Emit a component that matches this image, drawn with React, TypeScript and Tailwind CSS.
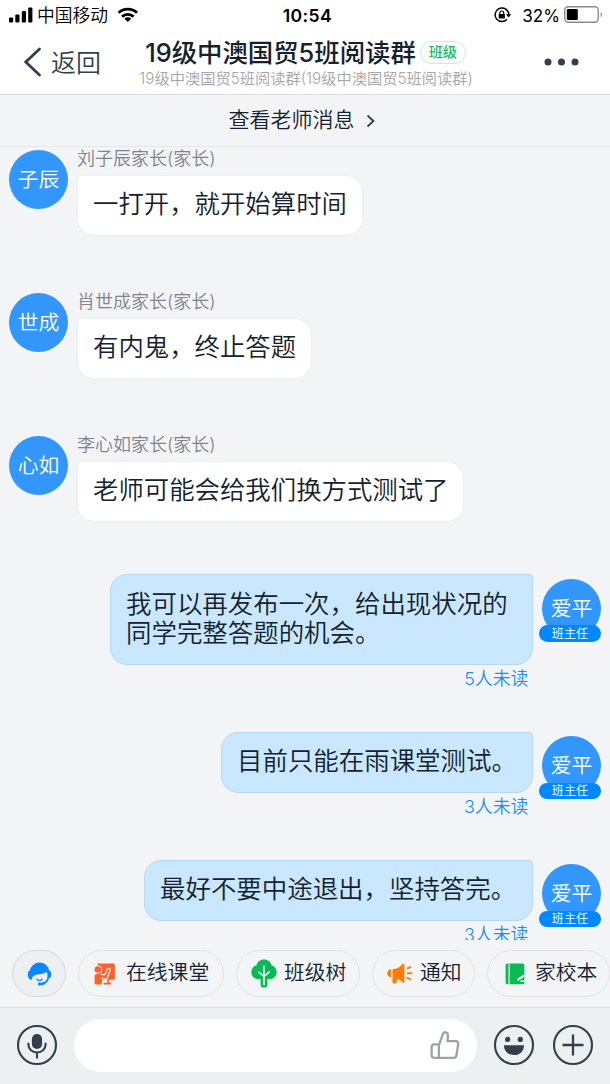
import React from "react";

const FONT = "font-['Inter','Noto_Sans_CJK_SC',sans-serif] font-[350]";

function SignalIcon() {
  return (
    <svg width="24" height="16" viewBox="0 0 24 16" fill="#000">
      <rect x="0" y="10.5" width="4.200" height="5" rx="1" />
      <rect x="6.3" y="7.5" width="4.200" height="8" rx="1" />
      <rect x="12.8" y="4" width="4.200" height="11.5" rx="1" />
      <rect x="19.2" y="0.5" width="4.200" height="15" rx="1" />
    </svg>
  );
}

function WifiIcon() {
  return (
    <svg width="22" height="16" viewBox="0 0 22 16" fill="none" stroke="#000" strokeWidth="2.9">
      <path d="M1.6 5.8a13.4 13.4 0 0 1 18.4 0" />
      <path d="M5 9.6a8.6 8.6 0 0 1 11.6 0" />
      <path d="M10.8 15 7.4 11.7a4.8 4.8 0 0 1 6.8 0Z" fill="#000" stroke="none" />
    </svg>
  );
}

function RotationLockIcon() {
  return (
    <svg width="18" height="16" viewBox="0 0 18 16" fill="none" stroke="#000" strokeWidth="1.5">
      <path d="M14.2 5.2A6.8 6.8 0 1 0 13 12.3" />
      <path d="M14.6 4.6v3.6" />
      <path d="M12 7.2h5.3L14.6 10.6Z" fill="#000" stroke="none" />
      <rect x="4.7" y="6.9" width="6.2" height="4.6" rx=".6" fill="#000" stroke="none" />
      <path d="M5.9 7.2V5.9a1.9 1.9 0 0 1 3.8 0v1.3" strokeWidth="1.2" />
    </svg>
  );
}

function BatteryIcon() {
  return (
    <svg width="40" height="18" viewBox="0 0 40 18">
      <rect x=".75" y=".75" width="33.5" height="15.5" rx="3.5" fill="none" stroke="#8c8c8c" strokeWidth="1.4" />
      <rect x="2.8" y="3" width="11" height="11" rx="1.2" fill="#000" />
      <path d="M36.6 6c1.8.8 1.8 4.3 0 5.2Z" fill="#8c8c8c" />
    </svg>
  );
}

function AgentIcon() {
  return (
    <svg width="25" height="24" viewBox="0 0 25 24">
      <path
        d="M.8 12.2C.8 10 1.5 9 2.6 8.800 4.300 3.300 8 .4 12.700.4c4.800 0 8.300 3 9.700 8.400 1.400.4 1.900 1.500 1.900 3.400 0 2.100-.7 3.600-2.300 4-1 4.300-4.300 6.900-8.200 7.100-1.700.3-3-.2-3-1.300s1.300-1.600 3-1.300c3.400-.2 5.400-1.500 6.400-4.200l.4-4.500c-.6-.4-1-1-1.200-2.200-1.300 1.300-3 2-5.500 2.300-3.600.4-6.500.7-8 2.500-.9.9-1.100 1.800-1 3.200H3.300C1.500 16.500.8 14.700.8 12.200Z"
        fill="#0a86ff"
      />
      <path d="M9.400 16.900c1.700 2.300 4.500 2.300 6.200 0" fill="none" stroke="#0a86ff" strokeWidth="1.300" />
    </svg>
  );
}

function ClassroomIcon() {
  return (
    <svg width="22" height="22" viewBox="0 0 22 22">
      <path d="M3.500.6h15.800a1.600 1.600 0 0 1 1.600 1.600v13a1.600 1.600 0 0 1-1.600 1.600H9L3.500 11Z" fill="#ff612c" />
      <path d="M14.200 16.500v4M9.500 20.600h7.800" stroke="#ff612c" strokeWidth="1.700" />
      <circle cx="3.900" cy="6.400" r="4.200" fill="#f2f4f6" />
      <circle cx="3.900" cy="6.500" r="3.300" fill="#ff612c" />
      <path
        d="M.6 19.500v-6.200c0-1.400 1-2.200 2.400-2.200h3.400l3.200 2.100 1.600 1-3.200 2.600v3.200a1.400 1.400 0 0 1-1.400 1.400H2.100A1.500 1.500 0 0 1 .6 19.500Z"
        fill="#ff612c"
      />
      <path
        d="m6.800 11.100 2.800.8c.8.200 1.300-.1 1.600-.8l1.900-4.800c.8-1.900 3.600-.9 3 1.100l-2.700 7.300c-.5 1.300-1.500 1.700-2.900 1.300l-3.300-1.200"
        fill="none"
        stroke="#f2f4f6"
        strokeWidth="1.200"
      />
    </svg>
  );
}

function TreeIcon() {
  return (
    <svg width="26" height="29" viewBox="0 0 26 29">
      <path
        d="M13 .5c4 0 6.800 2.300 7.500 5.700 3.100.9 5.200 3.800 5.200 7 0 4.400-3.400 6.900-7.600 6.900h-1.700v6.200a2.200 2.200 0 0 1-2.200 2.200h-2.400a2.200 2.200 0 0 1-2.200-2.200v-6.200H7.900C3.700 20.100.3 17.600.3 13.200c0-3.200 2.100-6.100 5.200-7C6.200 2.800 9 .5 13 .5Z"
        fill="#0bba55"
      />
      <path
        d="M13 7.200v18.400M13 17.500l-5-4.300M13 17.500l5.200-4.600"
        fill="none"
        stroke="#fff"
        strokeWidth="1.500"
        strokeLinecap="round"
      />
    </svg>
  );
}

function HornIcon() {
  return (
    <svg width="26" height="22" viewBox="0 0 26 22" fill="#ff7a0a">
      <path d="M4.100 6.300v7.900C1.500 14.200.3 12.500.3 10.300s1.200-4 3.800-4Z" />
      <path d="M5.500 6.200c4.300-.2 7.400-2 10.200-5.100.6-.7 1.700-.3 1.700.6v17.200c0 .9-1.100 1.300-1.700.6-1.700-1.900-3.400-3.200-5.400-4.100l-.6 3.700c-.1.800-.6 1.300-1.400 1.300H6.900c-.8 0-1.400-.6-1.400-1.400Z" />
      <path d="m19.700 5.700 4.300-1.900M20 10.200h5.300M19.700 14.700l4.300 1.900" stroke="#ff7a0a" strokeWidth="2" />
    </svg>
  );
}

function NotebookIcon() {
  return (
    <svg width="20" height="22" viewBox="0 0 20 22">
      <path d="M2.500.5h15a1.900 1.900 0 0 1 1.900 1.900v17a1.900 1.900 0 0 1-1.900 1.900h-15A1.900 1.900 0 0 1 .6 19.400v-17A1.900 1.900 0 0 1 2.500.5Z" fill="#0bba55" />
      <path d="M4.100.5v20.800" stroke="#f2f4f6" strokeWidth="1.100" />
      <path d="m12.300 17.800.5-2.200 5.700-3.900 1.300 1.400-5.300 4.200ZM15.800 17.600h4.200v1.300h-5Z" fill="#fff" />
    </svg>
  );
}

function MicIcon() {
  return (
    <svg width="42" height="42" viewBox="0 0 42 42" fill="none" stroke="#323f4c" strokeWidth="2.100">
      <circle cx="21" cy="21" r="19" />
      <rect x="15.900" y="10" width="10.200" height="15" rx="5.100" fill="#323f4c" stroke="none" />
      <path d="M12.400 18.800v1.400c0 5.300 3.900 8.300 8.600 8.300s8.600-3 8.600-8.300v-1.400M21 28.500v6" />
    </svg>
  );
}

function SmileIcon() {
  return (
    <svg width="42" height="42" viewBox="0 0 42 42" fill="#323f4c">
      <circle cx="21" cy="21" r="19" fill="none" stroke="#323f4c" strokeWidth="2.100" />
      <circle cx="14.700" cy="15.400" r="2.600" />
      <circle cx="27.300" cy="15.400" r="2.600" />
      <path d="M11 21.200h20c0 6-4.200 9.900-10 9.900s-10-3.900-10-9.900Z" />
    </svg>
  );
}

function PlusIcon() {
  return (
    <svg width="42" height="42" viewBox="0 0 42 42" fill="none" stroke="#323f4c" strokeWidth="2.100">
      <circle cx="21" cy="21" r="19" />
      <path d="M21 10.500v21M10.500 21h21" strokeWidth="2.300" />
    </svg>
  );
}

function ThumbIcon() {
  return (
    <svg width="30" height="30" viewBox="0 0 30 30" fill="none" stroke="#9da2aa" strokeWidth="2.300" strokeLinejoin="round">
      <path d="M9.200 14.300 13 3.900c.7-2.600 4.800-2.100 4.900 1.100l-.3 6.200h8.300c1.500 0 2.500 1.200 2.300 2.600l-1.700 11.400c-.2 1.600-1.400 2.600-3 2.600H4.300c-1.600 0-2.700-1.100-2.700-2.700V17c0-1.600 1.100-2.700 2.700-2.700ZM8.900 14.300v13.500" />
    </svg>
  );
}

type Incoming = { avatar: string; name: string; text: string; height: string };

const incoming: Incoming[] = [
  { avatar: "子辰", name: "刘子辰家长(家长)", text: "一打开，就开始算时间", height: "h-[143px]" },
  { avatar: "世成", name: "肖世成家长(家长)", text: "有内鬼，终止答题", height: "h-[143px]" },
  { avatar: "心如", name: "李心如家长(家长)", text: "老师可能会给我们换方式测试了", height: "h-[138px]" },
];

type Outgoing = { lines: string[]; unread: string; width: string; height: string; bubbleHeight: string };

const outgoing: Outgoing[] = [
  {
    lines: ["我可以再发布一次，给出现状况的", "同学完整答题的机会。"],
    unread: "5人未读",
    width: "w-[423px]",
    height: "h-[157.5px]",
    bubbleHeight: "h-[91px]",
  },
  { lines: ["目前只能在雨课堂测试。"], unread: "3人未读", width: "w-[312px]", height: "h-[128px]", bubbleHeight: "h-[61.5px]" },
  { lines: ["最好不要中途退出，坚持答完。"], unread: "3人未读", width: "w-[389px]", height: "h-[128px]", bubbleHeight: "h-[61.5px]" },
];

function Avatar({ text }: { text: string }) {
  return (
    <div className="flex size-[59px] shrink-0 items-center justify-center rounded-full bg-[#3296fa] pt-[2px] text-[20.8px] leading-none text-white">
      {text}
    </div>
  );
}

function IncomingRow({ item }: { item: Incoming }) {
  return (
    <div className={`flex shrink-0 items-start gap-[9px] pl-[9px] ${item.height}`}>
      <Avatar text={item.avatar} />
      <div className="flex flex-col items-start">
        <div className="-mt-px mb-[8px] h-[18px] whitespace-nowrap pt-px text-[18px] leading-[17px] text-[#7d848d]">{item.name}</div>
        <div className="h-[61px] whitespace-nowrap rounded-[17px] rounded-tl-[4px] border border-[#eceef1] bg-white px-[15px] pt-[13px] text-[25.4px] leading-[30px] text-[#14212e]">
          {item.text}
        </div>
      </div>
    </div>
  );
}

function OutgoingRow({ item }: { item: Outgoing }) {
  return (
    <div className={`flex shrink-0 items-start justify-end gap-[6px] pr-[9px] ${item.height}`}>
      <div className="flex flex-col items-end">
        <div
          className={`whitespace-nowrap rounded-[17px] rounded-tr-[4px] border border-[#b7d7ef] bg-[#c9e7ff] px-[15px] pt-[13.5px] text-[25.45px] leading-[29.5px] text-[#14212e] ${item.width} ${item.bubbleHeight}`}
        >
          {item.lines.map((line) => (
            <div key={line}>{line}</div>
          ))}
        </div>
        <div className="mr-[4.5px] mt-[4.5px] text-[17.9px] leading-[18px] text-[#1a8cfb]">{item.unread}</div>
      </div>
      <div className="mt-[4.5px] flex w-[62px] flex-col items-end">
        <Avatar text="爱平" />
        <div className="relative -mt-[12.5px] flex h-[16.5px] w-[62px] items-center justify-center rounded-full bg-[#0089ff] pt-[1px] text-[12.2px] leading-none text-white">
          班主任
        </div>
      </div>
    </div>
  );
}

function Chip({ icon, label, width, pad, gap }: { icon: React.ReactNode; label: string; width: string; pad: string; gap: string }) {
  return (
    <div className={`flex h-[47px] shrink-0 items-center whitespace-nowrap rounded-full border border-[#e0e2e5] text-[20.8px] leading-none text-[#14212e] ${width} ${pad} ${gap}`}>
      {icon}
      <span className="-mt-[1px]">{label}</span>
    </div>
  );
}

export default function App() {
  return (
    <div className={`flex h-[1084px] w-[610px] flex-col overflow-hidden bg-[#f2f4f6] ${FONT}`}>
      <header className="flex h-[95px] shrink-0 flex-col border-b border-[#dcdde4] bg-white">
        <div className="grid h-[30px] grid-cols-[1fr_auto_1fr] items-center text-black">
          <div className="flex items-center pl-[9px]">
            <SignalIcon />
            <span className="ml-[4px] pt-[1px] text-[17.8px] leading-none">中国移动</span>
            <span className="ml-[9px]">
              <WifiIcon />
            </span>
          </div>
          <div className="pl-[5px] pt-[2px] text-[17.6px] font-semibold leading-none tracking-[0.4px]">10:54</div>
          <div className="flex items-center justify-end pr-[6px]">
            <RotationLockIcon />
            <span className="ml-[10px] pt-[2px] text-[17.1px] font-normal leading-none">32%</span>
            <span className="ml-[4px]">
              <BatteryIcon />
            </span>
          </div>
        </div>
        <div className="flex flex-1">
          <div className="flex w-[139px] items-center pl-[23px] text-[#323f4c]">
            <svg width="19" height="30" viewBox="0 0 19 30" fill="none" stroke="#323f4c" strokeWidth="2.8" strokeLinecap="round">
              <path d="M16.500 2 2.800 15l13.700 13" />
            </svg>
            <span className="ml-[9px] pt-[2px] text-[25px] leading-none">返回</span>
          </div>
          <div className="flex w-[334px] flex-col items-center">
            <div className="mt-[6px] flex items-center gap-[4px] whitespace-nowrap pr-[1px]">
              <span className="text-[25.4px] font-medium leading-[33px] text-[#14212e]">19级中澳国贸5班阅读群</span>
              <span className="-mt-[1px] flex h-[23px] w-[46px] items-center justify-center rounded-full border border-[#c5efd6] pt-[1px] text-[14.2px] font-medium leading-none text-[#0fbd5b]">
                班级
              </span>
            </div>
            <div className="whitespace-nowrap text-[15.25px] leading-[20px] text-[#a5a5a8]">19级中澳国贸5班阅读群(19级中澳国贸5班阅读群)</div>
          </div>
          <div className="flex flex-1 items-center pl-[71px]">
            <svg width="36" height="8" viewBox="0 0 36 8" fill="#323f4c">
              <circle cx="4" cy="4" r="3.500" />
              <circle cx="17.500" cy="4" r="3.500" />
              <circle cx="31" cy="4" r="3.500" />
            </svg>
          </div>
        </div>
      </header>

      <div className="flex h-[52px] shrink-0 items-center justify-center gap-[11px] border-b border-[#e6e8eb] pb-[2px] pr-[6px] text-[21px] leading-none text-[#14212e]">
        <span>查看老师消息</span>
        <svg className="mt-[3px]" width="10" height="14" viewBox="0 0 10 14" fill="none" stroke="#323f4c" strokeWidth="1.800">
          <path d="m1.500 1.500 6 5.500-6 5.500" />
        </svg>
      </div>

      <main className="flex h-[793px] shrink-0 flex-col overflow-hidden pt-[3px]">
        {incoming.map((item) => (
          <IncomingRow key={item.name} item={item} />
        ))}
        {outgoing.map((item) => (
          <OutgoingRow key={item.lines[0]} item={item} />
        ))}
      </main>

      <div className="flex h-[67px] shrink-0 gap-[12px] overflow-hidden pl-[12px] pt-[10px]">
        <div className="flex h-[47px] w-[54px] shrink-0 items-center justify-center rounded-full border border-[#d5d9dd] bg-[#ecf0f3]">
          <AgentIcon />
        </div>
        <Chip icon={<ClassroomIcon />} label="在线课堂" width="w-[146px]" pad="pl-[15px]" gap="gap-[10px]" />
        <Chip icon={<TreeIcon />} label="班级树" width="w-[124px]" pad="pl-[14px]" gap="gap-[7px]" />
        <Chip icon={<HornIcon />} label="通知" width="w-[103px]" pad="pl-[14px]" gap="gap-[7px]" />
        <Chip icon={<NotebookIcon />} label="家校本" width="w-[123px]" pad="pl-[17px]" gap="gap-[10px]" />
      </div>

      <footer className="flex h-[77px] shrink-0 items-center border-t border-[#dcdfe2] bg-[#ecf0f1] pb-[2px] pl-[16px]">
        <MicIcon />
        <div className="ml-[16px] flex h-[53px] w-[403px] items-center justify-end rounded-full bg-white pr-[17px]">
          <ThumbIcon />
        </div>
        <span className="ml-[16px]">
          <SmileIcon />
        </span>
        <span className="ml-[17px]">
          <PlusIcon />
        </span>
      </footer>
    </div>
  );
}
